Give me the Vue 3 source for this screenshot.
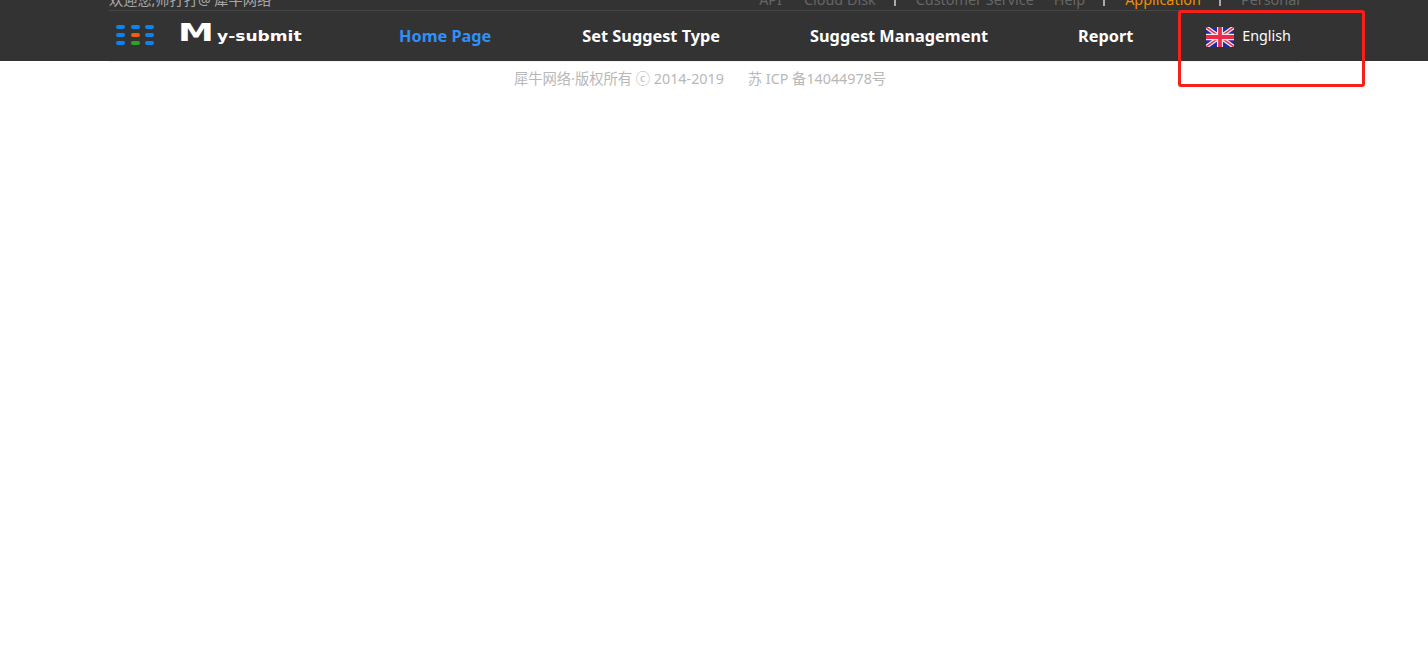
<script setup>
const topLinks = [
  { text: 'API', cls: 'gap-none' },
  { text: 'Cloud Disk', cls: 'gap-wide' },
  { sep: true },
  { text: 'Customer Service', cls: 'gap-wide' },
  { text: 'Help', cls: 'gap-mid' },
  { sep: true },
  { text: 'Application', cls: 'gap-wide orange' },
  { sep: true },
  { text: 'Personal', cls: 'gap-wide' }
]
const nav = [
  { text: 'Home Page', cls: 'active' },
  { text: 'Set Suggest Type', cls: '' },
  { text: 'Suggest Management', cls: '' },
  { text: 'Report', cls: '' }
]
const dots = ['b', 'b', 'b', 'b', 'o', 'b', 'b', 'g', 'b']
</script>

<template>
  <div class="page">
    <header class="header">
      <div class="top">
        <div class="top-inner">
          <span class="welcome">欢迎您,师打打@ 犀牛网络</span>
          <div class="links">
            <template v-for="(l, i) in topLinks" :key="i">
              <i v-if="l.sep" class="sep"></i>
              <span v-else :class="l.cls">{{ l.text }}</span>
            </template>
          </div>
        </div>
      </div>
      <div class="bar">
        <div class="grid">
          <i v-for="(d, i) in dots" :key="i" :class="d"></i>
        </div>
        <div class="logo"><b>M</b><span>y-submit</span></div>
        <nav class="nav">
          <a v-for="n in nav" :key="n.text" :class="n.cls">{{ n.text }}</a>
        </nav>
        <div class="lang">
          <svg width="28" height="20" viewBox="0 0 60 40" preserveAspectRatio="none">
            <rect width="60" height="40" fill="#1a2c9c" />
            <path d="M0 0L60 40M60 0L0 40" stroke="#f4e8ee" stroke-width="8" />
            <path d="M0 0L60 40M60 0L0 40" stroke="#e8304f" stroke-width="3" />
            <path d="M30 0V40M0 20H60" stroke="#f6e6ea" stroke-width="13" />
            <path d="M30 0V40M0 20H60" stroke="#ee2a48" stroke-width="8" />
          </svg>
          <span>English</span>
        </div>
      </div>
    </header>
    <footer class="foot">
      <span>犀牛网络·版权所有 ⓒ 2014-2019</span>
      <span>苏 ICP 备14044978号</span>
    </footer>
    <div class="mark"></div>
  </div>
</template>

<style>
html, body { margin: 0; background: #fff; }
</style>

<style scoped>
.page {
  position: relative;
  height: 649px;
  overflow: hidden;
  font-family: "Noto Sans", "Noto Sans CJK SC", sans-serif;
}
.header { background: #333; }
.top { height: 10px; overflow: hidden; }
.top-inner {
  margin-left: 109px;
  width: 1191px;
  height: 10px;
  display: flex;
  justify-content: space-between;
  align-items: flex-end;
  font-size: 14.4px;
  line-height: 20px;
  color: #666;
}
.welcome { color: #a8a8a8; flex: none; font-size: 14.2px; }
.links { display: flex; align-items: flex-end; height: 20px; }
.links span { display: block; flex: none; white-space: nowrap; }
.gap-wide { margin-left: 22px; }
.gap-mid { margin-left: 20px; }
.sep { width: 2px; height: 16px; background: #aaa; flex: none; margin: 0 0 4px 18px; }
.sep + .gap-wide { margin-left: 20px; }
.orange { color: #f08c00; }
.bar {
  position: relative;
  height: 50px;
  margin-top: 1px;
  display: flex;
  align-items: center;
  padding-left: 116px;
}
.bar::before {
  content: "";
  position: absolute;
  left: 109px;
  width: 1191px;
  top: -1px;
  height: 1px;
  background: #464646;
}
.bar::after {
  content: "";
  position: absolute;
  left: 109px;
  width: 1191px;
  bottom: -1px;
  height: 1px;
  background: #f2f2f2;
}
.grid {
  display: grid;
  grid-template-columns: repeat(3, 9px);
  grid-auto-rows: 4.5px;
  column-gap: 5.5px;
  row-gap: 3.5px;
  flex: none;
  margin-top: -2px;
}
.grid i { border-radius: 2px; display: block; }
.grid .b { background: #0a84f0; }
.grid .o { background: #f0600a; }
.grid .g { background: #28a428; }
.logo {
  margin-left: 24px;
  width: 124px;
  height: 20px;
  flex: none;
  color: #fff;
  display: flex;
  align-items: baseline;
  font-family: "DejaVu Sans", sans-serif;
  line-height: 20px;
  white-space: nowrap;
  margin-top: -7px;
}
.logo b {
  display: inline-block;
  font-size: 24px;
  font-weight: 700;
  width: 39px;
  transform: scaleX(1.5);
  transform-origin: left center;
}
.logo span {
  display: inline-block;
  font-size: 14px;
  font-weight: 700;
  transform: scaleX(1.22);
  transform-origin: left center;
}
.nav {
  margin-left: 97px;
  margin-top: -1px;
  display: flex;
  gap: 90px;
  flex: none;
}
.nav a {
  font-size: 16.3px;
  font-weight: 700;
  color: #fff;
  white-space: nowrap;
}
.nav a.active { color: #2e90fa; padding-right: 1px; }
.lang {
  margin-left: 73px;
  display: flex;
  align-items: center;
  gap: 8px;
  color: #fff;
  font-size: 14.3px;
  flex: none;
  margin-top: -2px;
}
.lang svg { display: block; margin-top: 4px; }
.foot {
  display: flex;
  justify-content: center;
  gap: 24px;
  font-size: 14.3px;
  line-height: 20px;
  color: #b8b8b8;
  margin-top: 8px;
  padding-right: 28px;
}
.mark {
  position: absolute;
  left: 1178px;
  top: 10px;
  width: 181px;
  height: 71px;
  border: 3px solid #f5201a;
  border-radius: 3px;
}
</style>
